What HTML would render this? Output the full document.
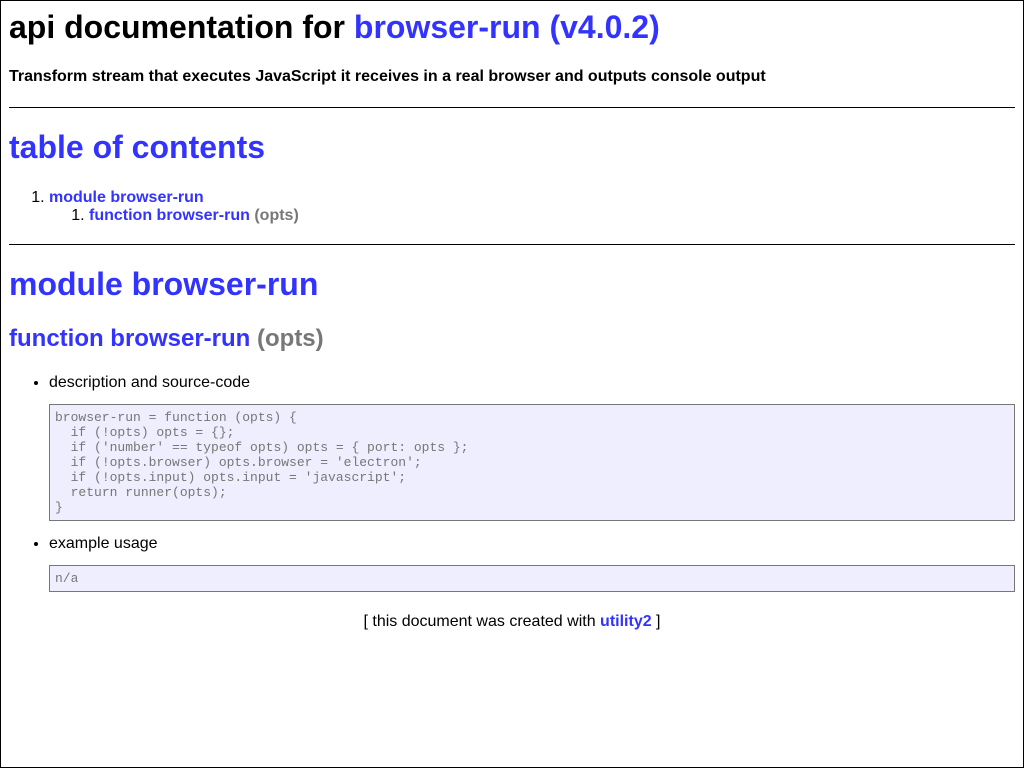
<!DOCTYPE html>
<html><head><style>
*{box-sizing:border-box}
html{margin:0;height:768px;border:1px solid #000;}
body{margin:0 8px;font-family:"Liberation Sans",Arial,sans-serif;color:#000;background:#fff;}
a{color:#33f;font-weight:bold;text-decoration:none}
.sig{color:#777}
h1{font-size:32px;line-height:37px;margin:0;font-weight:bold}
h2{font-size:24px;line-height:28px;margin:22px 0 0;font-weight:bold}
h4{font-size:16px;line-height:18px;margin:22px 0 0;font-weight:bold}
.hr{border-top:1px solid #000;height:0;margin-top:21px}
ol,ul{margin:0;padding-left:40px;font-size:16px;line-height:18px}
pre{background:#eef;border:1px solid #777;color:#777;padding:5px;margin:12px 0 0;font-family:"Liberation Mono",monospace;font-size:13px;line-height:15px;white-space:pre-wrap}
.foot{text-align:center;margin-top:21px;font-size:16px;line-height:18px}
</style></head><body>
<div style="height:8px"></div>
<h1>api documentation for <a>browser-run (v4.0.2)</a></h1>
<h4>Transform stream that executes JavaScript it receives in a real browser and outputs console output</h4>
<div class="hr"></div>
<h1 style="margin-top:21px"><a>table of contents</a></h1>
<ol style="margin-top:23px"><li><a>module browser-run</a>
<ol><li><a>function browser-run</a> <span class="sig" style="font-weight:bold">(opts)</span></li></ol></li></ol>
<div class="hr" style="margin-top:19px"></div>
<h1 style="margin-top:21px"><a>module browser-run</a></h1>
<h2><a>function browser-run</a> <span class="sig">(opts)</span></h2>
<ul style="margin-top:21px"><li>description and source-code
<pre>browser-run = function (opts) {
  if (!opts) opts = {};
  if ('number' == typeof opts) opts = { port: opts };
  if (!opts.browser) opts.browser = 'electron';
  if (!opts.input) opts.input = 'javascript';
  return runner(opts);
}</pre></li>
<li style="margin-top:14px">example usage
<pre>n/a</pre></li></ul>
<div class="foot">[ this document was created with <a>utility2</a> ]</div>
</body></html>
